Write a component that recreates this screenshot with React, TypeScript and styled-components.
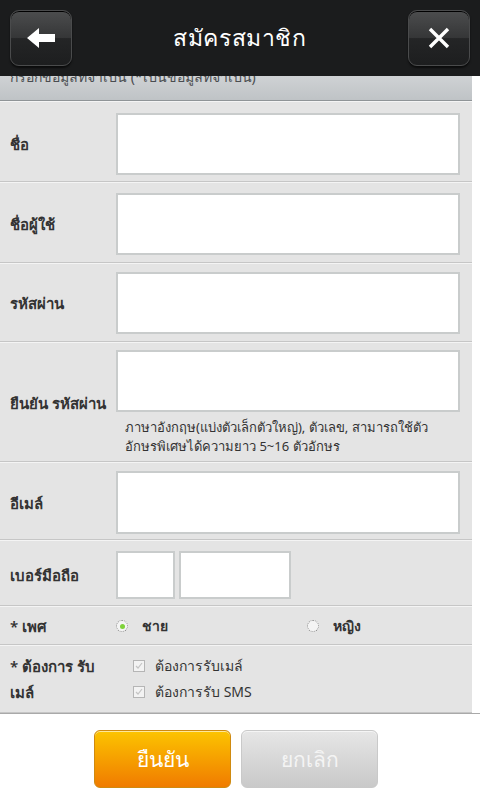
import * as React from 'react';
import styled, { createGlobalStyle } from 'styled-components';

const GlobalStyle = createGlobalStyle`
  html, body {
    margin: 0;
    padding: 0;
    background: #ffffff;
  }
  body {
    font-family: "Noto Sans", "DejaVu Sans", "Liberation Sans", sans-serif;
    width: 480px;
    height: 800px;
    overflow: hidden;
  }
`;

const Page = styled.div`
  width: 480px;
  height: 800px;
  display: flex;
  flex-direction: column;
  background: #ffffff;
`;

const TopBar = styled.header`
  height: 76px;
  flex-shrink: 0;
  background: #1b1c1d;
  display: flex;
  align-items: center;
  justify-content: space-between;
  padding: 0 10px;
  box-sizing: border-box;
`;

const BarButton = styled.button`
  width: 62px;
  height: 56px;
  border-radius: 9px;
  border: 1px solid #4a4b4c;
  background: linear-gradient(#4c4d4e 0%, #353637 50%, #242526 51%, #1d1e1f 100%);
  box-shadow: 0 1px 0 #000 inset, 0 2px 2px rgba(0, 0, 0, 0.6);
  display: flex;
  align-items: center;
  justify-content: center;
  padding: 0;
`;

const Title = styled.h1`
  margin: 0;
  color: #ffffff;
  font-size: 23px;
  font-weight: 500;
  letter-spacing: 0.6px;
`;

const Body = styled.div`
  width: 472px;
  display: flex;
  flex-direction: column;
  background: #e4e4e4;
`;

const SectionBar = styled.div`
  height: 24px;
  overflow: hidden;
  background: linear-gradient(#cfd2d4, #bfc3c6);
  border-bottom: 1px solid #8f9497;
  padding-left: 10px;
  color: #4a4d50;
  font-size: 14px;
  line-height: 16px;
`;

const SectionText = styled.div`
  margin-top: -7px;
`;

const Row = styled.div<{ $pad?: string }>`
  display: flex;
  align-items: center;
  border-top: 1px solid #f4f4f4;
  border-bottom: 1px solid #c6c6c6;
  padding: ${(p) => p.$pad ?? '10px 12px 7px 0'};
`;

const Label = styled.div`
  width: 106px;
  padding-left: 10px;
  flex-shrink: 0;
  color: #333333;
  font-size: 15px;
  font-weight: 600;
  line-height: 26px;
`;

const Field = styled.div`
  flex: 1;
  display: flex;
  flex-direction: column;
`;

const TextBox = styled.div<{ $w?: number; $h?: number }>`
  box-sizing: border-box;
  height: ${(p) => p.$h ?? 62}px;
  width: ${(p) => (p.$w ? `${p.$w}px` : '100%')};
  background: #ffffff;
  border: 2px solid #c9cccc;
`;

const Hint = styled.div`
  margin: 6px 0 0 9px;
  color: #333333;
  font-size: 13px;
  line-height: 19px;
`;

const PhoneGroup = styled.div`
  display: flex;
  gap: 4px;
`;

const Choices = styled.div`
  flex: 1;
  display: flex;
  align-items: center;
`;

const Choice = styled.div<{ $w?: number }>`
  width: ${(p) => p.$w ?? 190}px;
  display: flex;
  align-items: center;
  gap: 14px;
  color: #333333;
  font-size: 14px;
  font-weight: 600;
`;

const Radio = styled.span<{ $on?: boolean }>`
  width: 10px;
  height: 10px;
  border-radius: 50%;
  border: 1px dotted #8a8a8a;
  background: #f4f4f4;
  display: flex;
  align-items: center;
  justify-content: center;
  &::after {
    content: '';
    width: 5px;
    height: 5px;
    border-radius: 50%;
    background: ${(p) => (p.$on ? '#7fd23a' : 'transparent')};
  }
`;

const CheckList = styled.div`
  flex: 1;
  display: flex;
  flex-direction: column;
  gap: 4px;
  padding-left: 17px;
`;

const CheckItem = styled.div`
  display: flex;
  align-items: center;
  gap: 10px;
  color: #333333;
  font-size: 14px;
  line-height: 22px;
`;

const CheckBox = styled.span`
  width: 10px;
  height: 10px;
  border: 1px solid #b5b5b5;
  background: #f3f3f3;
  display: flex;
  align-items: center;
  justify-content: center;
`;

const Footer = styled.div`
  flex: 1;
  border-top: 1px solid #a9a9a9;
  display: flex;
  justify-content: center;
  padding-top: 16px;
  gap: 10px;
  padding-right: 8px;
`;

const ActionButton = styled.button<{ $primary?: boolean }>`
  width: 137px;
  height: 58px;
  border-radius: 6px;
  font-family: inherit;
  font-size: 21px;
  font-weight: 500;
  color: ${(p) => (p.$primary ? '#ffffff' : '#f4f4f4')};
  border: 1px solid ${(p) => (p.$primary ? '#cf8a10' : '#c9c9c9')};
  background: ${(p) =>
    p.$primary
      ? 'linear-gradient(#fcc400, #f07b00)'
      : 'linear-gradient(#e6e6e6, #c9c9c9)'};
  box-shadow: 0 1px 0 rgba(255, 255, 255, 0.6) inset;
`;

const ArrowIcon = () => (
  <svg width="30" height="22" viewBox="0 0 30 22">
    <polygon points="1,11 13,1 13,7 29,7 29,15 13,15 13,21" fill="#ffffff" />
  </svg>
);

const CloseIcon = () => (
  <svg width="22" height="22" viewBox="0 0 22 22">
    <path d="M2 2 L20 20 M20 2 L2 20" stroke="#ffffff" strokeWidth="3.4" />
  </svg>
);

const TickMark = () => (
  <svg width="8" height="8" viewBox="0 0 8 8">
    <path d="M1 4 L3 6 L7 1" stroke="#c4c4c4" strokeWidth="1.2" fill="none" />
  </svg>
);

export default function App() {
  return (
    <Page>
      <GlobalStyle />
      <TopBar>
        <BarButton aria-label="back">
          <ArrowIcon />
        </BarButton>
        <Title>สมัครสมาชิก</Title>
        <BarButton aria-label="close">
          <CloseIcon />
        </BarButton>
      </TopBar>
      <Body>
        <SectionBar>
          <SectionText>กรอกข้อมูลที่จำเป็น (*เป็นข้อมูลที่จำเป็น)</SectionText>
        </SectionBar>
        <Row $pad="11px 12px 6px 0">
          <Label>ชื่อ</Label>
          <Field>
            <TextBox />
          </Field>
        </Row>
        <Row>
          <Label>ชื่อผู้ใช้</Label>
          <Field>
            <TextBox />
          </Field>
        </Row>
        <Row $pad="8px 12px 7px 0">
          <Label>รหัสผ่าน</Label>
          <Field>
            <TextBox />
          </Field>
        </Row>
        <Row $pad="7px 12px 5px 0">
          <Label>ยืนยัน รหัสผ่าน</Label>
          <Field>
            <TextBox />
            <Hint>
              ภาษาอังกฤษ(แบ่งตัวเล็กตัวใหญ่), ตัวเลข, สามารถใช้ตัว
              <br />
              อักษรพิเศษได้ความยาว 5~16 ตัวอักษร
            </Hint>
          </Field>
        </Row>
        <Row $pad="8px 12px 5px 0">
          <Label>อีเมล์</Label>
          <Field>
            <TextBox $h={63} />
          </Field>
        </Row>
        <Row $pad="10px 12px 6px 0">
          <Label>เบอร์มือถือ</Label>
          <PhoneGroup>
            <TextBox $w={59} $h={48} />
            <TextBox $w={112} $h={48} />
          </PhoneGroup>
        </Row>
        <Row $pad="6px 12px 5px 0">
          <Label>* เพศ</Label>
          <Choices>
            <Choice $w={191}>
              <Radio $on />
              ชาย
            </Choice>
            <Choice>
              <Radio />
              หญิง
            </Choice>
          </Choices>
        </Row>
        <Row $pad="7px 12px 7px 0">
          <Label>
            * ต้องการ รับ
            <br />
            เมล์
          </Label>
          <CheckList>
            <CheckItem>
              <CheckBox>
                <TickMark />
              </CheckBox>
              ต้องการรับเมล์
            </CheckItem>
            <CheckItem>
              <CheckBox>
                <TickMark />
              </CheckBox>
              ต้องการรับ SMS
            </CheckItem>
          </CheckList>
        </Row>
      </Body>
      <Footer>
        <ActionButton $primary>ยืนยัน</ActionButton>
        <ActionButton>ยกเลิก</ActionButton>
      </Footer>
    </Page>
  );
}
